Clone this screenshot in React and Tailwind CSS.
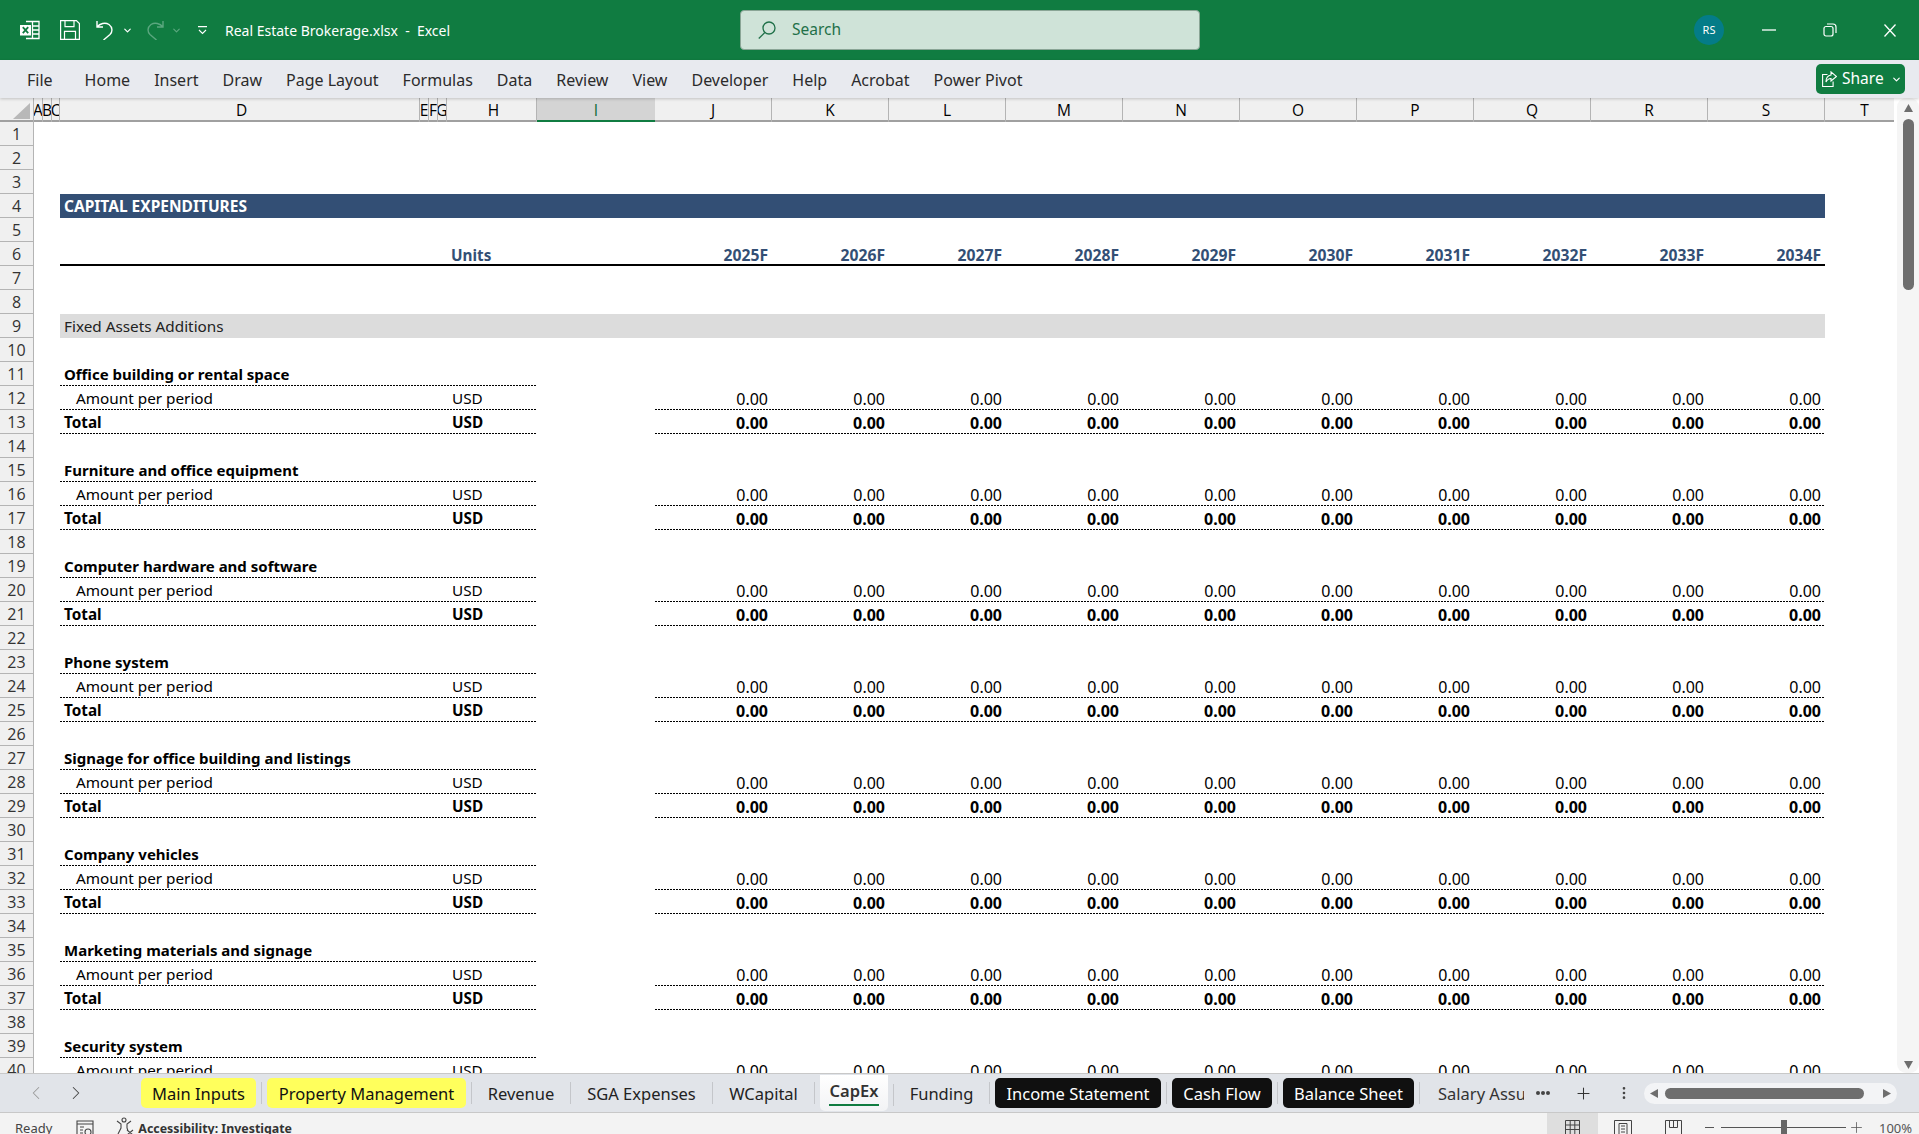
import { ChevronDown, ChevronLeft, ChevronRight, Plus, MoreVertical } from "lucide-react";

const columns = ["A", "B", "C", "D", "E", "F", "G", "H", "I", "J", "K", "L", "M", "N", "O", "P", "Q", "R", "S", "T"];
const years = ["2025F", "2026F", "2027F", "2028F", "2029F", "2030F", "2031F", "2032F", "2033F", "2034F"];
const menu = ["Home", "Insert", "Draw", "Page Layout", "Formulas", "Data", "Review", "View", "Developer", "Help", "Acrobat", "Power Pivot"];
const groups = {
  11: "Office building or rental space",
  15: "Furniture and office equipment",
  19: "Computer hardware and software",
  23: "Phone system",
  27: "Signage for office building and listings",
  31: "Company vehicles",
  35: "Marketing materials and signage",
  39: "Security system",
};

const tabs = [
  { name: "Main Inputs", w: "w-[115px]", cls: "bg-[#ffff5c] text-[#111] rounded-[5px]" },
  { name: "Property Management", w: "w-[199px]", cls: "bg-[#ffff5c] text-[#111] rounded-[5px]" },
  { name: "Revenue", w: "w-[88px]", cls: "bg-[#e1e4e9] text-[#222] rounded-[5px]" },
  { name: "SGA Expenses", w: "w-[131px]", cls: "bg-[#e1e4e9] text-[#222] rounded-[5px]" },
  { name: "WCapital", w: "w-[91px]", cls: "bg-[#e1e4e9] text-[#222] rounded-[5px]" },
  { name: "CapEx", active: true },
  { name: "Funding", w: "w-[85px]", cls: "bg-[#e1e4e9] text-[#222] rounded-[5px]" },
  { name: "Income Statement", w: "w-[166px]", cls: "bg-[#101010] text-white rounded-[5px]" },
  { name: "Cash Flow", w: "w-[100px]", cls: "bg-[#101010] text-white rounded-[5px]" },
  { name: "Balance Sheet", w: "w-[131px]", cls: "bg-[#101010] text-white rounded-[5px]" },
];

const dotted =
  "bg-[repeating-linear-gradient(90deg,#000_0_2px,transparent_2px_3px)] bg-bottom bg-no-repeat bg-[length:100%_1px]";
const rowGrid =
  "grid h-6 shrink-0 grid-rows-[24px] grid-cols-[34px_9px_9px_8px_360px_9px_9px_9px_90px_118px_repeat(10,117px)_80px] text-[15.300px] leading-6 text-black";

function Row({ n, children }) {
  return (
    <div className={rowGrid}>
      <div className="col-start-1 flex items-center justify-center border-r border-b border-[#b4b4b4] bg-[#f0f0f0] pt-[1px] font-['Open_Sans',sans-serif] text-[16px] text-[#333]">
        {n}
      </div>
      {children}
    </div>
  );
}

function ColumnHeader() {
  return (
    <div className={`${rowGrid} border-b-2 border-[#a0a0a0] bg-[#f0f0f0] font-['Open_Sans',sans-serif] leading-[24px]`}>
      <div className="flex items-end justify-end border-r border-[#b4b4b4] pr-[3px] pb-[3px]">
        <svg width="17" height="16" viewBox="0 0 17 16">
          <polygon points="17,0 17,16 0,16" fill="#b8b8b8" />
        </svg>
      </div>
      {columns.map((c) => (
        <div
          key={c}
          className={
            c === "I"
              ? "flex justify-center overflow-hidden border-b-2 border-[#107c41] bg-[#d4d4d4] text-[15.500px] text-[#0f6b3a]"
              : `flex justify-center overflow-hidden border-r border-[#b4b4b4] text-[15.500px] text-black ${c === "D" || c === "H" ? "pl-[4px]" : ""}`
          }
        >
          {c}
        </div>
      ))}
    </div>
  );
}

function DataRow({ n, label, bold, indent, value }) {
  const weight = bold ? "font-bold" : "";
  return (
    <Row n={n}>
      <div className={`col-start-5 col-span-4 ${dotted} ${weight} ${indent ? "pl-4" : "pl-1"}`}>{label}</div>
      <div className={`pl-[5px] ${dotted} ${weight}`}>USD</div>
      {years.map((y, i) => (
        <div key={y} className={`${i === 0 ? "col-start-11" : ""} pr-[4px] text-right text-[16px] leading-[26px] ${dotted} ${weight}`}>
          {value}
        </div>
      ))}
    </Row>
  );
}

function SheetRows() {
  const rows = [];
  for (let n = 1; n <= 40; n++) {
    if (n === 4) {
      rows.push(
        <Row key={n} n={n}>
          <div className="col-start-5 col-span-16 bg-[#334f75] pl-1 text-[15.500px] font-bold text-white">CAPITAL EXPENDITURES</div>
        </Row>
      );
    } else if (n === 6) {
      rows.push(
        <Row key={n} n={n}>
          <div className="col-start-5 col-span-4 border-b-2 border-black" />
          <div className="border-b-2 border-black pl-[4px] font-bold leading-[26px] text-[#334f75]">Units</div>
          <div className="border-b-2 border-black" />
          {years.map((y) => (
            <div key={y} className="border-b-2 border-black pr-[4px] text-right text-[15.700px] leading-[26px] font-bold text-[#334f75]">
              {y}
            </div>
          ))}
        </Row>
      );
    } else if (n === 9) {
      rows.push(
        <Row key={n} n={n}>
          <div className="col-start-5 col-span-16 bg-[#dcdcdc] pl-1 text-[#222]">Fixed Assets Additions</div>
        </Row>
      );
    } else if (groups[n]) {
      rows.push(
        <Row key={n} n={n}>
          <div className={`col-start-5 col-span-5 pl-1 text-[15px] font-bold ${dotted}`}>{groups[n]}</div>
        </Row>
      );
    } else if (n >= 12 && (n - 12) % 4 === 0) {
      rows.push(<DataRow key={n} n={n} label="Amount per period" indent value="0.00" />);
    } else if (n >= 13 && (n - 13) % 4 === 0) {
      rows.push(<DataRow key={n} n={n} label="Total" bold value="0.00" />);
    } else {
      rows.push(<Row key={n} n={n} />);
    }
  }
  return rows;
}

function ExcelIcon() {
  return (
    <svg width="20" height="20" viewBox="0 0 20 20" fill="none">
      <path d="M6 1.500h13v17H6" stroke="#fff" strokeWidth="1.300" />
      <path d="M12.500 1.500v17M12.500 6h6.500M12.500 10h6.500M12.500 14h6.500" stroke="#fff" strokeWidth="1.300" />
      <rect x="0" y="5" width="11" height="10.500" fill="#fff" />
      <path d="M2.800 7.200l5.400 6M8.200 7.200l-5.400 6" stroke="#107c41" strokeWidth="1.800" />
    </svg>
  );
}

function SaveIcon() {
  return (
    <svg width="20" height="20" viewBox="0 0 20 20" fill="none" stroke="#fff" strokeWidth="1.200">
      <path d="M.6.6h15.800l3 3v15.800H.6z" />
      <path d="M5 .6v6h9v-6M4.500 19.400v-8h11v8" />
    </svg>
  );
}

function UndoIcon({ color = "#fff" }) {
  return (
    <svg width="18" height="20" viewBox="0 0 18 20" fill="none" stroke={color} strokeWidth="1.400">
      <path d="M1 1v6h6M1 7c3-3.500 8-5 12-2.500 4 3 3.500 7.500 1 10L7.500 20" />
    </svg>
  );
}

function SearchIcon() {
  return (
    <svg width="18" height="18" viewBox="0 0 18 18" fill="none" stroke="#1f7048" strokeWidth="1.300">
      <circle cx="11" cy="7" r="6" />
      <path d="M6.800 11.500L.8 17.500" />
    </svg>
  );
}

function ShareIcon() {
  return (
    <svg width="15" height="16" viewBox="0 0 15 16" fill="none" stroke="#fff" strokeWidth="1.100">
      <path d="M5.500 3.500H.6v12h10.500v-5" />
      <path d="M9 .8l5.500 4.700L9 10V7.500C6.500 7.500 5 9 4 11c0-3.500 1.500-6.500 5-7z" />
    </svg>
  );
}

function Arrow({ dir }) {
  const points = {
    up: "0,8 4.500,0 9,8",
    down: "0,0 4.500,8 9,0",
    left: "8,0 0,4.500 8,9",
    right: "0,0 8,4.500 0,9",
  }[dir];
  const size = dir === "up" || dir === "down" ? { w: 9, h: 8 } : { w: 8, h: 9 };
  return (
    <svg width={size.w} height={size.h} viewBox={`0 0 ${size.w} ${size.h}`}>
      <polygon points={points} fill="#6e6e6e" />
    </svg>
  );
}

function TitleBar() {
  return (
    <div className="flex h-[60px] shrink-0 items-center bg-[#107c41] text-white">
      <div className="flex w-[740px] shrink-0 items-center pl-5">
        <ExcelIcon />
        <div className="ml-5">
          <SaveIcon />
        </div>
        <div className="ml-4">
          <UndoIcon />
        </div>
        <ChevronDown className="ml-[8px] text-white" size={11} strokeWidth={2.600} />
        <div className="ml-[13px] -scale-x-100">
          <UndoIcon color="#5ba77f" />
        </div>
        <ChevronDown className="ml-[7px] text-[#5ba77f]" size={11} strokeWidth={2.600} />
        <svg className="ml-[16px]" width="9" height="9" viewBox="0 0 9 9" fill="none" stroke="#fff" strokeWidth="1.100">
          <path d="M0 .6h9M1 4l3.500 3.500L8 4" />
        </svg>
        <span className="ml-[18px] whitespace-nowrap text-[14px]">
          Real Estate Brokerage.xlsx&nbsp; - &nbsp;Excel
        </span>
      </div>
      <div className="flex h-10 w-[460px] shrink-0 items-center rounded-[4px] border border-[#8aa596] bg-[#cfe3d8] pl-[17px] text-[15.500px] text-[#1f7048]">
        <SearchIcon />
        <span className="ml-4">Search</span>
      </div>
      <div className="flex flex-1 items-center justify-end">
        <div className="flex h-[30px] w-[30px] items-center justify-center rounded-full bg-[#047c88] text-[11px] text-white">
          RS
        </div>
        <svg className="ml-[38px]" width="14" height="2" viewBox="0 0 14 2" fill="none" stroke="#fff" strokeWidth="1.300">
          <path d="M0 1h14" />
        </svg>
        <svg className="ml-[47px]" width="14" height="14" viewBox="0 0 14 14" fill="none" stroke="#fff" strokeWidth="1.200">
          <rect x="1" y="3.500" width="9" height="9.500" rx="2" />
          <path d="M4 1h6a3 3 0 0 1 3 3v6" />
        </svg>
        <svg className="mr-[23px] ml-[47px]" width="12" height="13" viewBox="0 0 12 13" fill="none" stroke="#fff" strokeWidth="1.300">
          <path d="M.5.5l11 12M11.500.5l-11 12" />
        </svg>
      </div>
    </div>
  );
}

function Ribbon() {
  return (
    <div className="z-10 flex h-[38px] shrink-0 items-center bg-[#e8eaef] pl-[27px] text-[16px] text-[#2b2b2b] shadow-[0_1px_3px_rgba(0,0,0,0.2)]">
      <span className="mt-[2px] mr-[32px]">File</span>
      <div className="mt-[2px] flex gap-[24px]">
        {menu.map((m) => (
          <span key={m}>{m}</span>
        ))}
      </div>
      <div className="mr-[14px] ml-auto flex h-[30px] w-[89px] items-center rounded-[5px] bg-[#107c41] pl-[6px] text-[15.500px] text-white">
        <ShareIcon />
        <span className="ml-[5px]">Share</span>
        <ChevronDown className="ml-[7px]" size={11} strokeWidth={2.600} />
      </div>
    </div>
  );
}

function VerticalScroll() {
  return (
    <div className="ml-[3px] flex flex-1 flex-col items-center rounded-[9px] bg-[#f5f5f5] pt-[6px] pb-[4px]">
      <Arrow dir="up" />
      <div className="mt-[7px] h-[171px] w-[11px] rounded-[6px] bg-[#6e6e6e]" />
      <div className="mt-auto">
        <Arrow dir="down" />
      </div>
    </div>
  );
}

function Sheet() {
  return (
    <div className="flex h-[975px] shrink-0 overflow-hidden bg-white font-['Noto_Sans',sans-serif]">
      <div className="flex w-[1894px] shrink-0 flex-col overflow-hidden">
        <ColumnHeader />
        <SheetRows />
      </div>
      <VerticalScroll />
    </div>
  );
}

function SheetTabs() {
  return (
    <div className="z-10 flex h-10 shrink-0 items-center border-t border-b border-[#c8c8c8] bg-[#e1e4e9] text-[16.500px]">
      <div className="flex w-[141px] shrink-0 items-center pl-[25px]">
        <ChevronLeft className="text-[#9a9a9a]" size={22} strokeWidth={1.100} />
        <ChevronRight className="ml-[18px] text-[#444]" size={22} strokeWidth={1.100} />
      </div>
      {tabs.map((t) => (
        <div key={t.name} className="flex items-end">
          {t.active ? (
            <div className="-my-[1px] flex h-[36px] w-[68px] flex-col items-center rounded-b-[5px] bg-gradient-to-b from-white to-[#f2f3f5] font-semibold text-[#333]">
              <span className="mt-[4px] border-b-[2px] border-[#107c41] px-[1px] pb-[1px] leading-[24px]">{t.name}</span>
            </div>
          ) : (
            <div className={`flex h-[30px] items-center justify-center pt-[2px] ${t.w} ${t.cls}`}>{t.name}</div>
          )}
          <div className="mx-[5px] mb-[4px] h-[22px] w-px bg-[#c4c6ca]" />
        </div>
      ))}
      <span className="ml-[13px] w-[86px] overflow-hidden pt-[2px] whitespace-nowrap text-[#333]">Salary Assu</span>
      <span className="ml-[12px] flex gap-[1px]">
        <i className="h-1 w-1 rounded-full bg-[#444]" />
        <i className="h-1 w-1 rounded-full bg-[#444]" />
        <i className="h-1 w-1 rounded-full bg-[#444]" />
      </span>
      <Plus className="ml-[24px] text-[#333]" size={19} strokeWidth={1.300} />
      <MoreVertical className="ml-[23px] text-[#444]" size={16} strokeWidth={2} />
      <div className="ml-[12px] flex h-[21px] w-[253px] items-center rounded-[11px] bg-[#f3f4f6] px-[6px]">
        <Arrow dir="left" />
        <div className="ml-[7px] h-[11px] w-[199px] rounded-[6px] bg-[#6e6e6e]" />
        <div className="ml-auto">
          <Arrow dir="right" />
        </div>
      </div>
    </div>
  );
}

function StatusBar() {
  return (
    <div className="flex h-[21px] shrink-0 items-start overflow-hidden bg-[#f3f3f3] text-[13px] leading-[31px] text-[#444]">
      <span className="ml-[15px]">Ready</span>
      <svg className="mt-[7px] ml-[24px]" width="18" height="18" viewBox="0 0 18 18" fill="none" stroke="#444" strokeWidth="1.100">
        <path d="M1 1h16v16H1zM1 4h16" />
        <path d="M4 7h4M4 10h3M4 13h3" />
        <circle cx="12" cy="12" r="3" />
      </svg>
      <svg className="mt-[4px] ml-[22px]" width="18" height="18" viewBox="0 0 18 18" fill="none" stroke="#444" strokeWidth="1.100">
        <circle cx="8" cy="3" r="2" />
        <path d="M1 4l4 3v4l-3 6M15 4l-4 3v4l1 3M11 13l6 5M17 13l-6 5" />
      </svg>
      <span className="ml-[4px] text-[12.400px] font-bold text-[#333]">Accessibility: Investigate</span>
      <div className="ml-auto flex h-full items-start">
        <div className="flex h-full w-[51px] justify-center bg-[#dedede] pt-[7px]">
          <svg width="15" height="14" viewBox="0 0 15 14" fill="none" stroke="#444" strokeWidth="1">
            <path d="M.5.5h14v14H.5zM5.200.5v14M9.800.5v14M.5 5h14M.5 9.500h14" />
          </svg>
        </div>
        <svg className="mt-[7px] ml-[16px]" width="18" height="16" viewBox="0 0 18 16" fill="none" stroke="#444" strokeWidth="1">
          <path d="M.5.5h17v16H.5zM5 3.500h8v12H5zM7 6h4M7 9h4M7 12h4" />
        </svg>
        <svg className="mt-[7px] ml-[33px]" width="17" height="16" viewBox="0 0 17 16" fill="none" stroke="#444" strokeWidth="1">
          <path d="M.5 16V.5h16V16M4.500.5v7h8v-7M8.500.5v7" />
        </svg>
        <div className="mt-[14px] ml-[23px] h-px w-[9px] bg-[#555]" />
        <div className="relative mt-[14px] ml-[7px] h-px w-[125px] bg-[#555]">
          <div className="absolute top-[-7px] left-[60px] h-[14px] w-[6px] bg-[#666]" />
        </div>
        <Plus className="mt-[6px] ml-[2px] text-[#555]" size={17} strokeWidth={1.100} />
        <span className="mr-[9px] ml-[14px] w-[31px] whitespace-nowrap text-[#555]">100%</span>
      </div>
    </div>
  );
}

export default function App() {
  return (
    <div className="flex h-screen w-full flex-col overflow-hidden bg-white font-['Noto_Sans',sans-serif]">
      <TitleBar />
      <Ribbon />
      <Sheet />
      <SheetTabs />
      <StatusBar />
    </div>
  );
}
